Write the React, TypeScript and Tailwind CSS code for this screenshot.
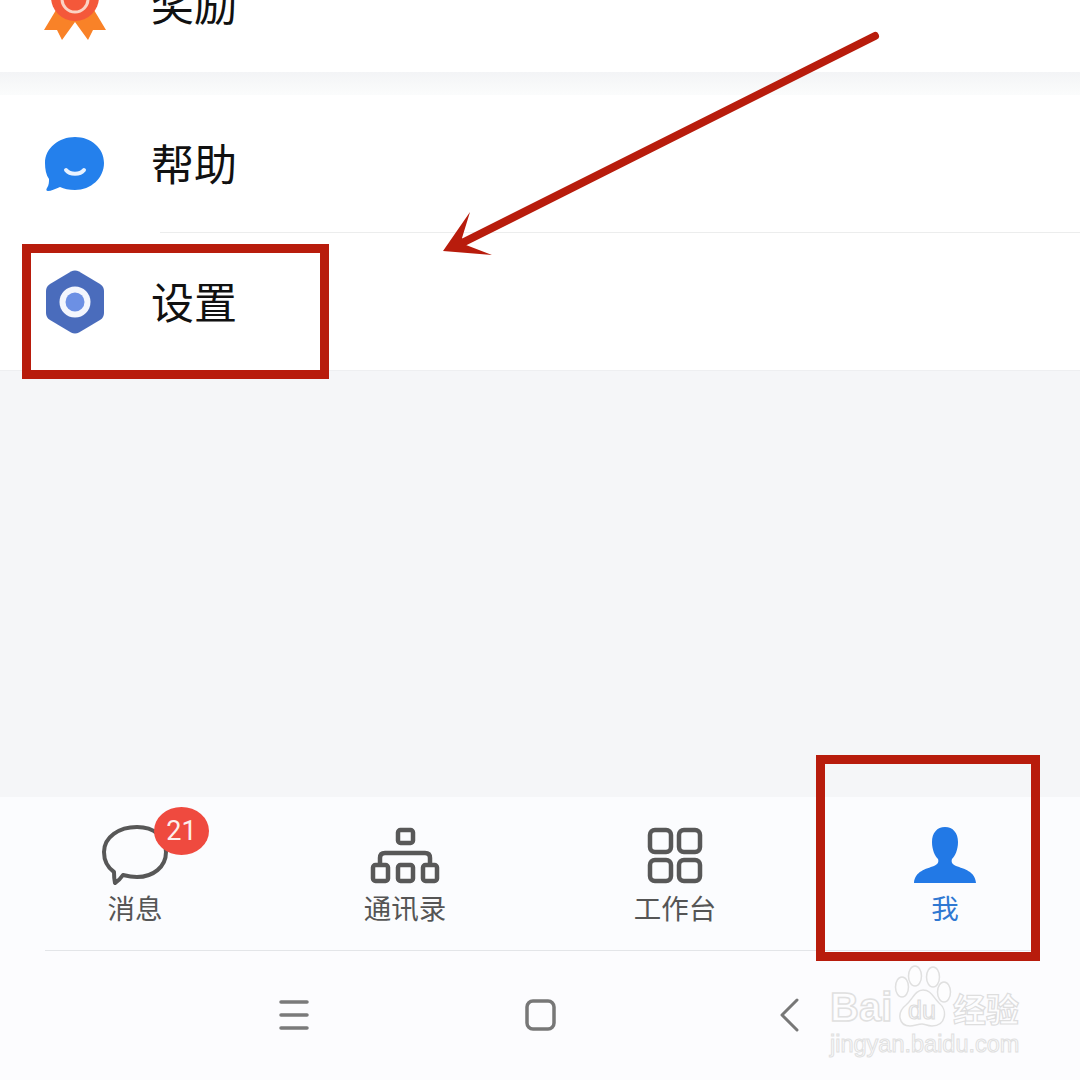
const CJK = "font-['Noto_Sans_CJK_SC','Noto_Sans',sans-serif]";

function Ribbon() {
  return (
    <svg width="62" height="72" viewBox="0 0 62 72">
      <path d="M0 62 L12 42 L50 42 L62 62 L49 62 L44 72 L31 54 L18 72 L13 62 Z" fill="#f98228" />
      <circle cx="31" cy="29" r="24" fill="#f4583a" />
      <circle cx="31" cy="31" r="13" fill="none" stroke="#fbd3c4" strokeWidth="3" />
    </svg>
  );
}

function Bubble() {
  return (
    <svg width="62" height="56" viewBox="0 0 62 56">
      <path d="M31 1 C47 1 60 12 60 27 C60 42 47 54 31 54 C25 54 20 53 16 51 C11 53 7 55 4 55 C2 55 2 53 3 52 C5 49 5 46 5 43 C2 39 1 33 1 27 C1 12 15 1 31 1 Z" fill="#2480ec" />
      <path d="M22 34 C26 39 36 39 40 34" fill="none" stroke="#e8f2ff" strokeWidth="4" strokeLinecap="round" />
    </svg>
  );
}

function Hex() {
  return (
    <svg width="62" height="66" viewBox="0 0 62 66">
      <path d="M27 2.5 Q31 0.5 35 2.5 L56 15 Q60 17.5 60 22 L60 44 Q60 48.5 56 51 L35 63.5 Q31 65.5 27 63.5 L6 51 Q2 48.5 2 44 L2 22 Q2 17.5 6 15 Z" fill="#4a6cbc" />
      <circle cx="31" cy="33" r="15.5" fill="#f3f6fd" />
      <circle cx="31" cy="33" r="9.5" fill="#6c90e4" />
    </svg>
  );
}

function Row({ icon, label, className = "" }: { icon: React.ReactNode; label: string; className?: string }) {
  return (
    <div className={`h-[137px] bg-white flex items-center pl-[44px] ${className}`}>
      <div className="w-[62px] flex items-center justify-center shrink-0">{icon}</div>
      <span className={`ml-[45px] pb-[2px] text-[43px] leading-none text-[#111] ${CJK}`}>{label}</span>
    </div>
  );
}

function Tab({ icon, label, active, badge }: { icon: React.ReactNode; label: string; active?: boolean; badge?: string }) {
  return (
    <div className="flex flex-col items-center pt-[28px]">
      <div className="relative h-[60px] w-[72px] flex items-center justify-center">
        {icon}
        {badge && (
          <span className="absolute left-[55px] top-[-18px] w-[55px] h-[48px] rounded-[50%] bg-[#ef4a3f] text-[#fdeeec] text-[27px] leading-[48px] text-center font-['Roboto',sans-serif]">
            {badge}
          </span>
        )}
      </div>
      <span className={`mt-[4px] text-[27.5px] leading-[36px] ${CJK} ${active ? "text-[#2f78d2]" : "text-[#555]"}`}>{label}</span>
    </div>
  );
}

export default function App() {
  return (
    <div className="relative w-[1080px] h-[1080px] overflow-hidden bg-[#f5f6f8] flex flex-col">
      <div className="-mt-[65px] shrink-0">
        <Row icon={<Ribbon />} label="奖励" />
      </div>
      <div className="h-[23px] shrink-0 bg-gradient-to-b from-[#f3f4f6] to-[#fbfcfc]" />
      <Row icon={<Bubble />} label="帮助" className="shrink-0" />
      <div className="h-px shrink-0 bg-white">
        <div className="ml-[160px] h-px bg-[#eceded]" />
      </div>
      <Row icon={<Hex />} label="设置" className="shrink-0" />
      <div className="h-px shrink-0 bg-[#eeeff1]" />
      <div className="flex-1" />

      <div className="h-[153px] shrink-0 bg-[#fbfcfe] grid grid-cols-4">
        <Tab
          label="消息"
          badge="21"
          icon={
            <svg width="72" height="60" viewBox="0 0 72 60">
              <path d="M38 2 C55 2 67 12 67 27 C67 42 54 52 38 52 C33 52 28 51 24 50 C22 53 19 56 16 58 C15 54 15 51 15 47 C8 42 5 35 5 27 C5 12 20 2 38 2 Z" fill="none" stroke="#575757" strokeWidth="4" strokeLinejoin="round" />
            </svg>
          }
        />
        <Tab
          label="通讯录"
          icon={
            <svg width="72" height="60" viewBox="0 0 72 60" fill="none" stroke="#585858" strokeWidth="4.5" strokeLinejoin="round">
              <rect x="29" y="5" width="15" height="13" rx="2.5" />
              <path d="M11 38 V33 Q11 28 16 28 H56 Q61 28 61 33 V38" strokeLinecap="round" />
              <rect x="4" y="40" width="15" height="16" rx="2.5" />
              <rect x="29" y="40" width="15" height="16" rx="2.5" />
              <rect x="54" y="40" width="14" height="16" rx="2.5" />
            </svg>
          }
        />
        <Tab
          label="工作台"
          icon={
            <svg width="72" height="60" viewBox="0 0 72 60" fill="none" stroke="#585858" strokeWidth="4.5">
              <rect x="11" y="5" width="21" height="22" rx="5" />
              <rect x="40" y="5" width="21" height="22" rx="5" />
              <rect x="11" y="35" width="21" height="21" rx="5" />
              <rect x="40" y="35" width="21" height="21" rx="5" />
            </svg>
          }
        />
        <Tab
          label="我"
          active
          icon={
            <svg width="72" height="60" viewBox="0 0 72 60">
              <path d="M36 2 C44 2 49 8 49 17 C49 25 46 31 43 34 C42 37 43 39 47 41 C55 44 66 46 67 58 L5 58 C6 46 17 44 25 41 C29 39 30 37 29 34 C26 31 23 25 23 17 C23 8 28 2 36 2 Z" fill="#2279e6" />
            </svg>
          }
        />
      </div>

      <div className="h-[130px] shrink-0 bg-[#fcfcfe]">
        <div className="mx-[45px] h-px bg-[#e3e5e8]" />
        <div className="flex items-center h-[129px] pl-[279px] pb-[1px]">
          <svg width="30" height="30" viewBox="0 0 30 30" stroke="#7a7a7a" strokeWidth="3.5" strokeLinecap="round">
            <path d="M2 2 H28 M2 15 H28 M2 28 H28" />
          </svg>
          <svg className="ml-[216px]" width="31" height="32" viewBox="0 0 31 32" fill="none" stroke="#777" strokeWidth="3.5">
            <rect x="2" y="2" width="27" height="28" rx="6" />
          </svg>
          <svg className="ml-[223px]" width="20" height="34" viewBox="0 0 20 34" fill="none" stroke="#777" strokeWidth="3" strokeLinecap="round" strokeLinejoin="round">
            <path d="M18 2 L3 17 L18 32" />
          </svg>
        </div>
      </div>

      {/* Annotations */}
      <div className="absolute left-[22px] top-[244px] w-[307px] h-[135px] border-[9px] border-[#b81c0c]" />
      <div className="absolute left-[816px] top-[755px] w-[224px] h-[206px] border-[9px] border-[#b81c0c]" />
      <svg className="absolute left-0 top-0 pointer-events-none" width="1080" height="300" viewBox="0 0 1080 300">
        <path d="M875 36 L462 243" stroke="#b81c0c" strokeWidth="8" strokeLinecap="round" fill="none" />
        <path d="M443 251 L470 212 L462 238 L466 245 L492 255 Z" fill="#b81c0c" />
      </svg>

      {/* Watermark */}
      <div className="absolute left-[830px] top-[979px] text-[40px] leading-[56px] font-bold text-[#fdfdfe] [-webkit-text-stroke:1.5px_#e0e0e0] font-['Liberation_Sans',sans-serif]">
        Bai
      </div>
      <svg className="absolute left-[893px] top-[963px]" width="60" height="66" viewBox="0 0 60 66" fill="#fdfdfe" stroke="#e0e0e0" strokeWidth="1.5">
        <ellipse cx="9" cy="24" rx="6.5" ry="10" />
        <ellipse cx="22" cy="13" rx="6.5" ry="10" />
        <ellipse cx="40" cy="14" rx="6.5" ry="10" />
        <ellipse cx="51" cy="29" rx="6.5" ry="10" />
        <path d="M30 27 C38 27 40 34 46 40 C55 47 53 63 39 63 C34 63 32 61 29 61 C25 61 21 63 17 63 C6 63 3 50 13 42 C20 36 22 27 30 27 Z" />
      </svg>
      <div className="absolute left-[908px] top-[996px] text-[25px] leading-[28px] text-[#fdfdfe] [-webkit-text-stroke:1.2px_#dcdcdc] font-['Liberation_Sans',sans-serif]">
        du
      </div>
      <div className={`absolute left-[953px] top-[986px] text-[33px] leading-[44px] font-bold text-[#fdfdfe] [-webkit-text-stroke:1.2px_#dedede] ${CJK}`}>
        经验
      </div>
      <div className="absolute left-[830px] top-[1031px] text-[23.5px] leading-[26px] text-[#fdfdfe] [-webkit-text-stroke:1px_#e0e0e0] font-['Liberation_Sans',sans-serif]">
        jingyan.baidu.com
      </div>
    </div>
  );
}
